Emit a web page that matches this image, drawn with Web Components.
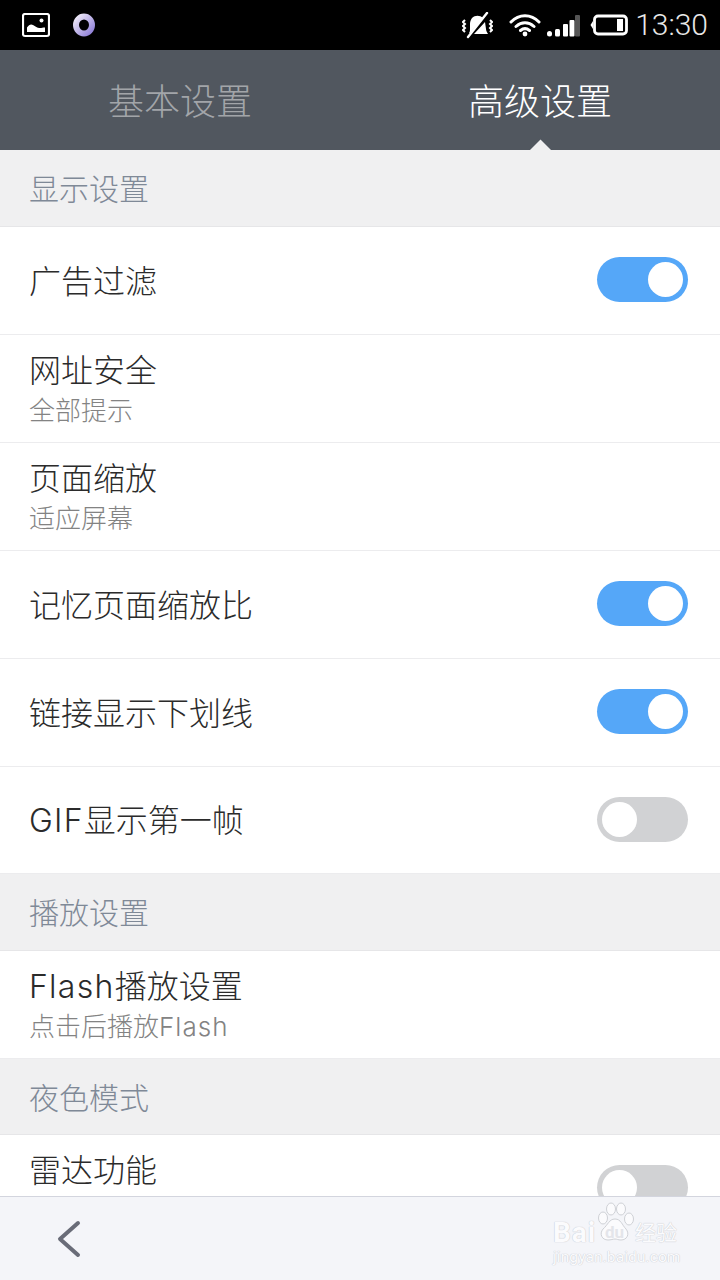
<!DOCTYPE html>
<html lang="zh">
<head>
<meta charset="utf-8">
<title>高级设置</title>
<style>
  html, body { margin: 0; padding: 0; }
  body {
    width: 720px;
    height: 1280px;
    overflow: hidden;
    font-family: "Noto Sans CJK SC", "Roboto", sans-serif;
  }
</style>
</head>
<body>
<settings-app></settings-app>

<script>
class StatusBar extends HTMLElement {
  constructor() {
    super();
    this.attachShadow({mode: 'open'}).innerHTML = `
      <style>
        :host { display: flex; align-items: center; height: 50px; background: #000; padding: 0 12px 0 22px; color: #e8e8e8; flex: none; }
        .left { display: flex; align-items: center; gap: 23px; flex: 1; }
        .right { display: flex; align-items: center; }
        svg { display: block; }
        .time { font: 300 30px Roboto, sans-serif; margin-left: 7px; line-height: 50px; color: #e8e8e8; }
      </style>
      <div class="left">
        <svg width="28" height="25" viewBox="0 0 28 25">
          <rect x="1" y="1" width="26" height="22" rx="2" fill="none" stroke="#fff" stroke-width="2.2"/>
          <path d="M5 19v-4.500c2-3 4-3.600 6-2.500 2.500 1.500 5 3.500 7 3 1.500 0 3-.6 5-.6V19z" fill="#fff"/>
          <circle cx="19.500" cy="7.500" r="2" fill="#fff"/>
        </svg>
        <svg width="22" height="24" viewBox="0 0 22 24">
          <defs><linearGradient id="ring" x1="0" y1="0" x2="1" y2="1"><stop offset="0" stop-color="#efeaf8"/><stop offset="1" stop-color="#8f7fd8"/></linearGradient></defs>
          <ellipse cx="11" cy="12" rx="8" ry="8.500" fill="none" stroke="url(#ring)" stroke-width="6"/>
        </svg>
      </div>
      <div class="right">
        <svg width="31" height="27" viewBox="0 0 31 27" style="margin-right:16px">
          <path d="M10 6c3-3 8-3 11 0L8 21H7c1-1 1-3 1-5v-4c0-2 .6-4 2-6zM23 10l1 7c0 2 1 3 2 5H12z" fill="#fff"/>
          <path d="M25 1 6 25" stroke="#fff" stroke-width="2.400" stroke-linecap="round"/>
          <path d="M3 8 1 10l2 2-2 2 2 2-2 2 2 2M28 8l2 2-2 2 2 2-2 2 2 2-2 2" fill="none" stroke="#fff" stroke-width="2"/>
        </svg>
        <svg width="32" height="24" viewBox="0 0 32 24" style="margin-right:5px">
          <path d="M2 9c8-8.500 20-8.500 28 0M7 13.500c5.500-5 12.500-5 18 0M11.500 17.500c3-2.500 6-2.500 9 0" fill="none" stroke="#fff" stroke-width="3" stroke-linecap="round"/>
          <circle cx="16" cy="21" r="2.400" fill="#fff"/>
        </svg>
        <svg width="34" height="24" viewBox="0 0 34 24" style="margin-right:10px">
          <rect x="1" y="18" width="5" height="5.500" rx="2.500" fill="#fff"/>
          <rect x="9" y="16" width="5" height="7.500" rx="1.500" fill="#fff"/>
          <rect x="17" y="11" width="5" height="12.500" rx="1" fill="#fff"/>
          <rect x="23.500" y="7" width="5" height="16.500" rx="1" fill="#fff"/>
          <rect x="29" y="2" width="5" height="21.500" rx="1" fill="#555"/>
        </svg>
        <svg width="38" height="22" viewBox="0 0 38 22">
          <path d="M3 7 .5 11 3 15z" fill="#fff"/>
          <rect x="4.500" y="2" width="32" height="18" rx="3.500" fill="none" stroke="#fff" stroke-width="2.800"/>
          <rect x="27" y="5" width="6" height="12" fill="#fff"/>
        </svg>
        <span class="time">13:30</span>
      </div>
    `;
  }
}
customElements.define('status-bar', StatusBar);

class TabBar extends HTMLElement {
  constructor() {
    super();
    this.attachShadow({mode: 'open'}).innerHTML = `
      <style>
        :host { display: flex; height: 100px; background: #51575f; flex: none; position: relative; overflow: hidden; }
        .tab { flex: 1; text-align: center; font-size: 36px; font-weight: 300; line-height: 98px; color: #a2a5a9; }
        .tab.on { color: #fff; position: relative; }
        .tab.on::after {
          content: ""; position: absolute; left: 50%; bottom: -9.500px; width: 17px; height: 17px; margin-left: -8.500px;
          background: #f0f0f1; transform: rotate(45deg);
        }
      </style>
      <div class="tab">基本设置</div>
      <div class="tab on">高级设置</div>
    `;
  }
}
customElements.define('tab-bar', TabBar);

class SectionHead extends HTMLElement {
  constructor() {
    super();
    this.attachShadow({mode: 'open'}).innerHTML = `
      <style>
        :host { display: flex; align-items: center; box-sizing: border-box; height: var(--h, 77px); padding: 0 29px 2px; background: #f0f0f1; border-bottom: 1px solid #e6e6e8; color: #7f8997; font-size: 30px; font-weight: 300; }
      </style>
      <slot></slot>
    `;
  }
}
customElements.define('section-head', SectionHead);

class ToggleSwitch extends HTMLElement {
  constructor() {
    super();
    this.attachShadow({mode: 'open'}).innerHTML = `
      <style>
        :host { display: block; width: 91px; height: 45px; border-radius: 23px; background: #d1d2d4; position: relative; flex: none; }
        :host([on]) { background: #55a7f8; }
        i { position: absolute; top: 5px; left: 5px; width: 35px; height: 35px; border-radius: 50%; background: #fff; }
        :host([on]) i { left: 51px; }
      </style>
      <i></i>
    `;
  }
}
customElements.define('toggle-switch', ToggleSwitch);

class SettingRow extends HTMLElement {
  static get observedAttributes() {
    return ['label', 'sub'];
  }

  constructor() {
    super();
    this.attachShadow({mode: 'open'}).innerHTML = `
      <style>
        :host { display: flex; align-items: center; box-sizing: border-box; height: 108px; padding: 0 32px 2px 29px; background: #fff; border-bottom: 1px solid #ececee; flex: none; }
        :host(:not([sub])) .text { padding-top: 4px; }
        /* row whose second line is hidden behind the bottom bar */
        :host([raised]) .text { padding: 0 0 34px; }
        .text { flex: 1; min-width: 0; font-family: Inter, "Noto Sans CJK SC", sans-serif; font-weight: 300; }
        .label { font-size: 32px; line-height: 44px; color: #2b2b2b; }
        .sub { font-size: 26px; line-height: 34px; color: #838383; margin: 1px 0 -1px; }
        .sub:empty { display: none; }
        span { letter-spacing: .04em; }
      </style>
      <div class="text">
        <div class="label" id="label"></div>
        <div class="sub" id="sub"></div>
      </div>
      <slot></slot>
    `;
  }

  attributeChangedCallback(name, oldValue, newValue) {
    // latin runs sit a little wider than the font gives them
    this.shadowRoot.getElementById(name).innerHTML = newValue.replace(/[A-Za-z]+/g, '<span>$&</span>');
  }
}
customElements.define('setting-row', SettingRow);

class BottomBar extends HTMLElement {
  constructor() {
    super();
    this.attachShadow({mode: 'open'}).innerHTML = `
      <style>
        :host { display: flex; align-items: center; box-sizing: border-box; height: 84px; padding: 0 0 0 56px; background: #f4f5f9; border-top: 1px solid #d3d5de; position: relative; flex: none; }
        svg { display: block; }
        .mark { position: absolute; left: 553px; top: 5px; width: 130px; height: 68px; color: #fbfbfd; text-shadow: 0 0 1px #c9cbd1, 0 0 1px #c9cbd1; }
        .bai { position: absolute; left: 0; top: 17px; font: 700 28px/28px Roboto, sans-serif; letter-spacing: 1px; }
        .du { position: absolute; left: 52px; top: 18px; font: 700 17px/24px Roboto, sans-serif; color: #e4e5ea; text-shadow: none; }
        .jy { position: absolute; left: 82px; top: 15px; font-size: 21px; line-height: 28px; white-space: nowrap; }
        .url { position: absolute; left: 0; top: 45px; font: 400 15.500px/20px Roboto, sans-serif; white-space: nowrap; letter-spacing: .1px; }
        .paw { position: absolute; left: 42px; top: 0; }
      </style>
      <svg width="26" height="38" viewBox="0 0 26 38">
        <path d="M22 3 4 19l18 16" fill="none" stroke="#696c78" stroke-width="4" stroke-linecap="round" stroke-linejoin="round"/>
      </svg>
      <div class="mark">
        <span class="bai">Bai</span>
        <svg class="paw" width="40" height="44" viewBox="0 0 40 44" fill="#fbfbfd" stroke="#cfd1d6" stroke-width="1">
          <ellipse cx="8" cy="16" rx="4.500" ry="6"/>
          <ellipse cx="16" cy="7" rx="4.500" ry="6"/>
          <ellipse cx="26" cy="7" rx="4.500" ry="6"/>
          <ellipse cx="34" cy="17" rx="4.500" ry="6"/>
          <path d="M20 17c6 0 7 6 11 10 4 5 1 11-5 11-3 0-4-1-6-1s-4 1-7 1c-6 0-9-6-5-11 5-4 6-10 12-10z"/>
        </svg>
        <span class="du">du</span>
        <span class="jy">经验</span>
        <span class="url">jingyan.baidu.com</span>
      </div>
    `;
  }
}
customElements.define('bottom-bar', BottomBar);

class SettingsApp extends HTMLElement {
  constructor() {
    super();
    this.attachShadow({mode: 'open'}).innerHTML = `
      <style>
        :host { display: flex; flex-direction: column; width: 720px; height: 1280px; overflow: hidden; background: #fff; }
        .list { flex: 1; min-height: 0; overflow: hidden; display: flex; flex-direction: column; }
        section-head, setting-row { flex: none; }
      </style>
      <status-bar></status-bar>
      <tab-bar></tab-bar>
      <div class="list">
        <section-head>显示设置</section-head>
        <setting-row label="广告过滤"><toggle-switch on></toggle-switch></setting-row>
        <setting-row label="网址安全" sub="全部提示"></setting-row>
        <setting-row label="页面缩放" sub="适应屏幕"></setting-row>
        <setting-row label="记忆页面缩放比"><toggle-switch on></toggle-switch></setting-row>
        <setting-row label="链接显示下划线"><toggle-switch on></toggle-switch></setting-row>
        <setting-row label="GIF显示第一帧" style="height:107px"><toggle-switch></toggle-switch></setting-row>
        <section-head>播放设置</section-head>
        <setting-row label="Flash播放设置" sub="点击后播放Flash"></setting-row>
        <section-head style="--h:76px">夜色模式</section-head>
        <setting-row label="雷达功能" raised><toggle-switch></toggle-switch></setting-row>
      </div>
      <bottom-bar></bottom-bar>
    `;
  }
}
customElements.define('settings-app', SettingsApp);
</script>
</body>
</html>
